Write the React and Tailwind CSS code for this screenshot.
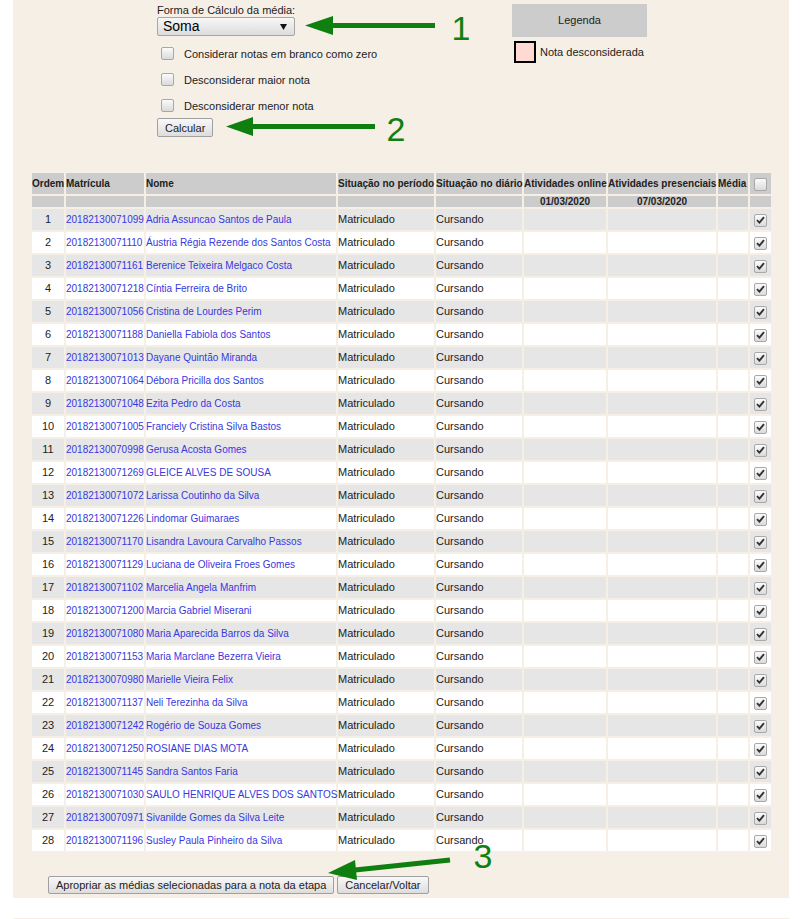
import React from "react";

const alunos = [
  ["20182130071099", "Adria Assuncao Santos de Paula"],
  ["20182130071110", "Áustria Régia Rezende dos Santos Costa"],
  ["20182130071161", "Berenice Teixeira Melgaco Costa"],
  ["20182130071218", "Cíntia Ferreira de Brito"],
  ["20182130071056", "Cristina de Lourdes Perim"],
  ["20182130071188", "Daniella Fabiola dos Santos"],
  ["20182130071013", "Dayane Quintão Miranda"],
  ["20182130071064", "Débora Pricilla dos Santos"],
  ["20182130071048", "Ezita Pedro da Costa"],
  ["20182130071005", "Franciely Cristina Silva Bastos"],
  ["20182130070998", "Gerusa Acosta Gomes"],
  ["20182130071269", "GLEICE ALVES DE SOUSA"],
  ["20182130071072", "Larissa Coutinho da Silva"],
  ["20182130071226", "Lindomar Guimaraes"],
  ["20182130071170", "Lisandra Lavoura Carvalho Passos"],
  ["20182130071129", "Luciana de Oliveira Froes Gomes"],
  ["20182130071102", "Marcelia Angela Manfrim"],
  ["20182130071200", "Marcia Gabriel Miserani"],
  ["20182130071080", "Maria Aparecida Barros da Silva"],
  ["20182130071153", "Maria Marclane Bezerra Vieira"],
  ["20182130070980", "Marielle Vieira Felix"],
  ["20182130071137", "Neli Terezinha da Silva"],
  ["20182130071242", "Rogério de Souza Gomes"],
  ["20182130071250", "ROSIANE DIAS MOTA"],
  ["20182130071145", "Sandra Santos Faria"],
  ["20182130071030", "SAULO HENRIQUE ALVES DOS SANTOS"],
  ["20182130070971", "Sivanilde Gomes da Silva Leite"],
  ["20182130071196", "Susley Paula Pinheiro da Silva"],
];

const opcoes = [
  "Considerar notas em branco como zero",
  "Desconsiderar maior nota",
  "Desconsiderar menor nota",
];

// caixinha de seleção desenhada (o checkbox nativo do headless fica azul)
function Caixa({ checked }) {
  return (
    <span className="inline-flex items-center justify-center w-[13px] h-[13px] rounded-[2px] border border-[#a8a8a8] bg-linear-to-b from-[#fbfbfb] to-[#dadada] align-middle">
      {checked && (
        <svg width="9" height="8" viewBox="0 0 9 8">
          <path d="M1 4.2 L3.4 6.6 L8 1.2" fill="none" stroke="#333" strokeWidth="1.9" />
        </svg>
      )}
    </span>
  );
}

const btn =
  "h-[18px] px-[7px] border border-[#a0a0a0] rounded-[2px] bg-linear-to-b from-[#f8f8f8] to-[#dddddd] text-[11px] leading-[16px] text-[#222]";

export default function App() {
  return (
    <div className="relative min-h-[919px] bg-white font-['Liberation_Sans',Arial,sans-serif] text-[11px] text-[#222]">
      <div className="ml-[13px] w-[776px] bg-[#f6efe5] pt-[4px] pb-[4px]">
        <div className="flex">
          <div className="ml-[144px] w-[355px]">
            <div className="leading-[13px]">Forma de Cálculo da média:</div>
            <div className="flex items-center justify-between w-[138px] h-[19px] pl-[5px] pr-[7px] border border-[#a6a6a6] rounded-[2px] bg-linear-to-b from-[#f7f7f7] to-[#dcdcdc] text-[14px] leading-[17px] text-black">
              <span>Soma</span>
              <svg width="7" height="6" viewBox="0 0 7 6">
                <path d="M0 0 H7 L3.5 6 Z" fill="#111" />
              </svg>
            </div>
            <div className="mt-[4px]">
              {opcoes.map((o) => (
                <div key={o} className="flex h-[26px]">
                  <span className="ml-[4px] mt-[4px] h-[13px]">
                    <Caixa />
                  </span>
                  <span className="ml-[10px] mt-[8px] leading-[13px]">{o}</span>
                </div>
              ))}
            </div>
            <button className={`${btn} h-[19px]`}>Calcular</button>
          </div>
          <div className="w-[135px]">
            <div className="h-[33px] bg-[#cccccc] flex items-center justify-center">Legenda</div>
            <div className="flex items-center mt-[4px] ml-[2px]">
              <span className="w-[22px] h-[22px] border-2 border-black bg-[#ffdad2]" />
              <span className="ml-[4px]">Nota desconsiderada</span>
            </div>
          </div>
        </div>

        <table className="mt-[34px] ml-[17px] w-[743px] table-fixed border-separate border-spacing-[2px]">
          <colgroup>
            <col className="w-[32px]" />
            <col className="w-[78px]" />
            <col className="w-[190px]" />
            <col className="w-[96px]" />
            <col className="w-[86px]" />
            <col className="w-[82px]" />
            <col className="w-[108px]" />
            <col className="w-[30px]" />
            <col className="w-[21px]" />
          </colgroup>
          <thead>
            <tr className="h-[21px] text-[10px] font-bold text-[#222] text-left whitespace-nowrap">
              <th className="p-0 bg-[#cccccc]">Ordem</th>
              <th className="p-0 bg-[#cccccc]">Matrícula</th>
              <th className="p-0 bg-[#cccccc]">Nome</th>
              <th className="p-0 bg-[#cccccc]">Situação no período</th>
              <th className="p-0 bg-[#cccccc]">Situação no diário</th>
              <th className="p-0 bg-[#cccccc]">Atividades online</th>
              <th className="p-0 bg-[#cccccc]">Atividades presenciais</th>
              <th className="p-0 bg-[#cccccc]">Média</th>
              <th className="p-0 bg-[#cccccc] text-center">
                <Caixa />
              </th>
            </tr>
            <tr className="h-[11px] text-[10px] leading-[11px] font-bold text-[#222]">
              <th className="p-0 bg-[#cccccc]" />
              <th className="p-0 bg-[#cccccc]" />
              <th className="p-0 bg-[#cccccc]" />
              <th className="p-0 bg-[#cccccc]" />
              <th className="p-0 bg-[#cccccc]" />
              <th className="p-0 bg-[#cccccc] text-center">01/03/2020</th>
              <th className="p-0 bg-[#cccccc] text-center">07/03/2020</th>
              <th className="p-0 bg-[#cccccc]" />
              <th className="p-0 bg-[#cccccc]" />
            </tr>
          </thead>
          <tbody>
            {alunos.map(([mat, nome], i) => {
              const bg = i % 2 === 0 ? "bg-[#e6e6e6]" : "bg-white";
              return (
                <tr key={mat} className="h-[21px] whitespace-nowrap">
                  <td className={`p-0 text-center ${bg}`}>{i + 1}</td>
                  <td className={`p-0 text-[10px] text-[#3838e0] ${bg}`}>{mat}</td>
                  <td className={`p-0 text-[10px] text-[#3838e0] ${bg}`}>{nome}</td>
                  <td className={`p-0 ${bg}`}>Matriculado</td>
                  <td className={`p-0 ${bg}`}>Cursando</td>
                  <td className={`p-0 ${bg}`} />
                  <td className={`p-0 ${bg}`} />
                  <td className={`p-0 ${bg}`} />
                  <td className={`p-0 text-center ${bg}`}>
                    <Caixa checked />
                  </td>
                </tr>
              );
            })}
          </tbody>
        </table>

        <div className="mt-[23px] ml-[35px] flex gap-[3px]">
          <button className={btn}>Apropriar as médias selecionadas para a nota da etapa</button>
          <button className={btn}>Cancelar/Voltar</button>
        </div>
      </div>
      <div className="ml-[13px] w-[776px] h-[2px] mt-[20px] bg-[#f6efe5]" />

      {/* setas de anotação por cima da tela */}
      <svg className="absolute top-0 left-0 pointer-events-none" width="800" height="919">
        <g fill="#0f7f0f">
          <polygon points="305,25.5 333,16 333,35" />
          <rect x="332" y="23" width="103" height="5" />
          <polygon points="226,126.5 253,117 253,136" />
          <rect x="252" y="124" width="123" height="5" />
          <polygon points="328,873 357,880 355,860" />
          <line x1="355" y1="870" x2="450" y2="860" stroke="#0f7f0f" strokeWidth="5" />
          <g fontFamily="'Liberation Sans', Arial, sans-serif" fontSize="34">
            <text x="461" y="40" textAnchor="middle">1</text>
            <text x="396" y="141" textAnchor="middle">2</text>
            <text x="483" y="868" textAnchor="middle">3</text>
          </g>
        </g>
      </svg>
    </div>
  );
}
